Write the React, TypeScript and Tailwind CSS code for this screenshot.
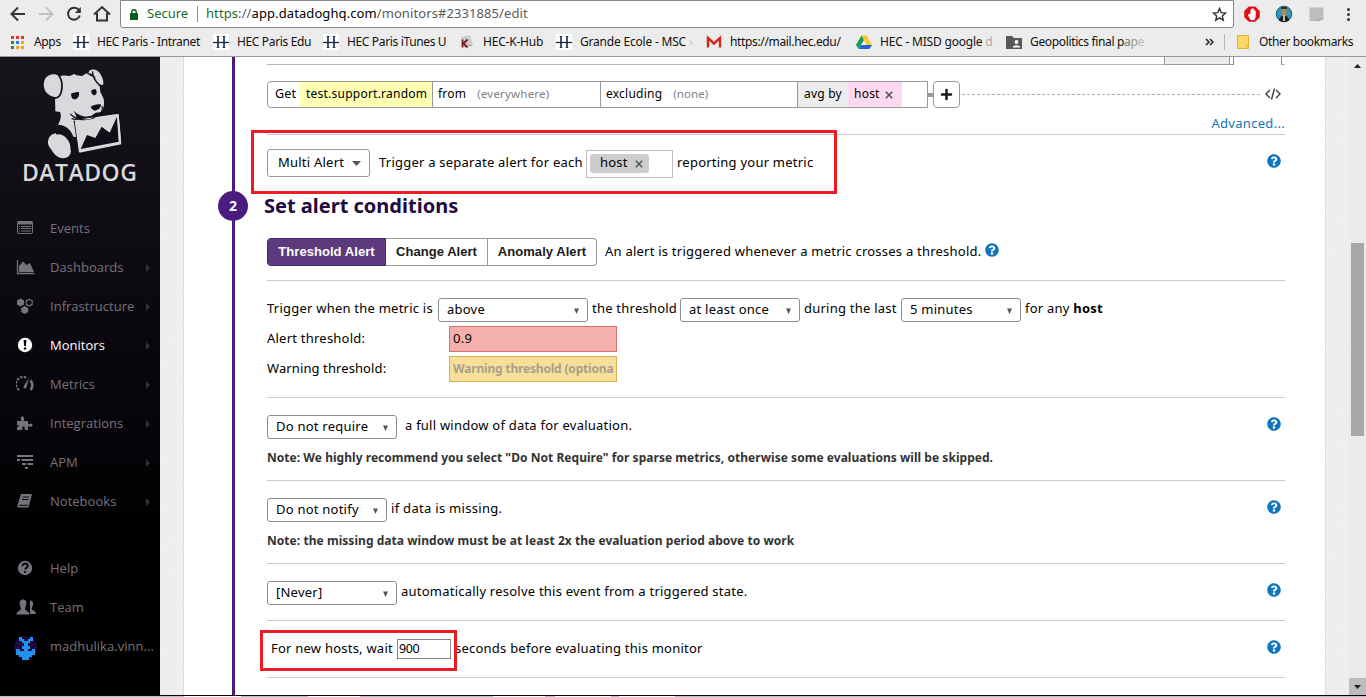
import React from "react";
import { FaQuestionCircle, FaPlus } from "react-icons/fa";

type Kids = { children?: React.ReactNode };

const T = ({ children, className = "" }: Kids & { className?: string }) => (
  <span className={`block shrink-0 whitespace-nowrap ${className}`}>{children}</span>
);

const HecIcon = () => (
  <svg width="16" height="16" viewBox="0 0 16 16" className="shrink-0">
    <rect width="16" height="16" fill="#fff" />
    <path d="M5 2v12M11 2v12" stroke="#14284b" strokeWidth="1.6" />
    <path d="M0 8.5h16" stroke="#14284b" strokeWidth="1.3" />
    <path d="M3.5 2.5h3M9.500 2.500h3M3.500 13.500h3M9.500 13.500h3" stroke="#14284b" strokeWidth=".6" />
  </svg>
);

const Toolbar = () => (
  <div className="flex h-[28px] items-center">
    <svg width="120" height="28" viewBox="0 0 120 28" className="shrink-0" fill="none" stroke="#333" strokeWidth="2">
      <path d="M25 14H12.500M18 7.500L11.500 14l6.500 6.500" />
      <path d="M39 14h12.500M46 7.500l6.500 6.500-6.500 6.500" stroke="#c3c3c3" />
      <path d="M79 10.200A6 6 0 1 0 79.800 15.500" />
      <path d="M80.800 7v6h-6z" fill="#333" stroke="none" />
      <path d="M94 14.500l8-7.500 8 7.500M97 13v7.500h10V13" />
    </svg>
    <div className="flex h-[28px] w-[1114px] shrink-0 items-center rounded-b-[3px] border border-[#868686] bg-white">
      <svg width="8" height="11" viewBox="0 0 8 11" className="ml-[9px] shrink-0">
        <rect y="4" width="8" height="7" rx=".6" fill="#0b5c1e" />
        <path d="M1.800 4.500V3a2.200 2.200 0 0 1 4.400 0v1.500" fill="none" stroke="#0b5c1e" strokeWidth="1.400" />
      </svg>
      <T className="ml-[9px] w-[50px] text-[13px] tracking-[0px] text-[#1b6c30]">Secure</T>
      <div className="h-[16px] w-px bg-[#8b8b8b]" />
      <T className="ml-[8px] w-[340px] text-[13px] tracking-[0.09px] text-[#5a5a5a]">
        <span className="text-[#1b6c30]">https</span>://<span className="text-black">app.datadoghq.com</span>/monitors#2331885/edit
      </T>
      <svg width="15" height="15" viewBox="0 0 15 15" className="ml-auto mr-[6px] shrink-0">
        <path d="M7.500 1.500l1.700 4.100 4.400.4-3.300 2.900 1 4.300-3.800-2.300-3.800 2.300 1-4.300L1.400 6l4.400-.4z" fill="none" stroke="#333" strokeWidth="1.400" />
      </svg>
    </div>
    <svg width="132" height="28" viewBox="0 0 132 28" className="shrink-0">
      <path d="M14.800 6.500h6.400l4.600 4.600v6.200l-4.600 4.500h-6.400l-4.600-4.500v-6.200z" fill="#e0101a" />
      <path d="M15 13.500l1.500 1V9.500h1.300V8.300h1.300v1h1.300v1.400h1.300V17l-1.500 3h-3.500L14 15.500z" fill="#fff" />
      <circle cx="50" cy="14" r="7.800" fill="#2a9ab8" stroke="#27607a" strokeWidth="1" />
      <path d="M44.500 20l3.500-5h4l3.500 5c-3 2.500-8 2.500-11 0z" fill="#1d2124" />
      <path d="M47 8.500h6l-.8 7.500h-4.400z" fill="#a98a62" />
      <path d="M47 7h6v2h-6z" fill="#3a2c20" />
      <path d="M49 15h2v6h-2z" fill="#d8b98a" />
      <path d="M75.500 7.500h14v8l-6 5.500h-8z" fill="#bdbdbd" />
      <path d="M89.500 15.500v5.500h-6z" fill="#d5d5d5" /><path d="M83 21l6.500-3.500" stroke="#8b8b8b" />
      <g fill="#333"><circle cx="114.500" cy="9.500" r="1.500" /><circle cx="114.500" cy="14.500" r="1.500" /><circle cx="114.500" cy="19.500" r="1.500" /></g>
    </svg>
  </div>
);

const appColors = ["bg-[#e8352b]", "bg-[#e8352b]", "bg-[#e8352b]", "bg-[#1d8e3e]", "bg-[#3478f6]", "bg-[#f4a11d]", "bg-[#1d8e3e]", "bg-[#f4a11d]", "bg-[#f4a11d]"];

const Bookmarks = () => (
  <div className="flex h-[28px] items-center pl-[11px] text-[12px] tracking-[-0.35px] text-[#111]">
    <div className="grid w-[13px] shrink-0 grid-cols-3 gap-[2px]">
      {appColors.map((c, i) => (
        <i key={i} className={`block h-[3px] w-[3px] ${c}`} />
      ))}
    </div>
    <T className="ml-[10px] w-[39px]">Apps</T>
    <HecIcon />
    <T className="ml-[8px] w-[116px]">HEC Paris - Intranet</T>
    <HecIcon />
    <T className="ml-[8px] w-[86px]">HEC Paris Edu</T>
    <HecIcon />
    <T className="ml-[8px] w-[112px]">HEC Paris iTunes U</T>
    <svg width="16" height="16" viewBox="0 0 16 16" className="shrink-0">
      <path d="M2 3l9-2 3 10-9 3z" fill="#cdcdcd" />
      <path d="M3.500 5.500v8M8.500 5.500L4.500 9.500l4 4" stroke="#7c1620" strokeWidth="1.800" fill="none" />
      <path d="M9 11.500h4" stroke="#c98a8f" />
    </svg>
    <T className="ml-[8px] w-[73px] tracking-[-0.2px]">HEC-K-Hub</T>
    <HecIcon />
    <T className="ml-[8px] w-[126px] tracking-[-0.2px]">Grande Ecole - MSC <span className="text-[#c5c5c5]">›</span></T>
    <svg width="16" height="16" viewBox="0 0 16 16" className="shrink-0">
      <path d="M2 4h12v9H2z" fill="#ececec" />
      <path d="M2 13.500V4l6 5.500L14 4v9.500" fill="none" stroke="#d3261d" strokeWidth="2.400" />
    </svg>
    <T className="ml-[8px] w-[126px]">https://mail.hec.edu/</T>
    <svg width="16" height="16" viewBox="0 0 16 16" className="shrink-0">
      <path d="M5.500 1.500L0 11l2.700 4L8 5.800z" fill="#109d58" />
      <path d="M5.500 1.500h5L16 11h-5.300z" fill="#fcc62d" />
      <path d="M5.200 11H16l-2.600 4H2.700z" fill="#2463e4" />
    </svg>
    <T className="ml-[8px] w-[126px] tracking-[-0.2px]">HEC - MISD google <span className="text-[#aaa]">d</span></T>
    <svg width="16" height="14" viewBox="0 0 16 14" className="shrink-0">
      <path d="M0 1h6l2 2h8v11H0z" fill="#585858" />
      <circle cx="10.500" cy="7" r="1.900" fill="#fff" /><path d="M6.800 12.500c0-3 7.400-3 7.400 0z" fill="#fff" />
    </svg>
    <T className="ml-[8px] w-[175px]">Geopolitics final p<span className="text-[#777]">a</span><span className="text-[#999]">p</span><span className="text-[#bbb]">e</span></T>
    <svg width="9" height="8" viewBox="0 0 9 8" className="shrink-0">
      <path d="M1 1l3 3-3 3M5 1l3 3-3 3" fill="none" stroke="#222" strokeWidth="1.500" />
    </svg>
    <div className="ml-[10px] h-[16px] w-px bg-[#b5b5b5]" />
    <svg width="12" height="14" viewBox="0 0 12 14" className="ml-[12px] shrink-0">
      <path d="M.5.500h11v9.500l-2 3.500h-9z" fill="#fdd868" stroke="#e3b233" /><path d="M9.500 13.500V9.500h2v4z" fill="#fdd868" stroke="#e3b233" />
    </svg>
    <T className="ml-[10px]">Other bookmarks</T>
  </div>
);

const DogLogo = () => (
  <svg width="90" height="96" viewBox="0 0 270 288" className="ml-[40px] mt-[9px] block">
    <g fill="#d9d8da">
      <path d="M58 32C72 26 82 30 90 30L102 24l8 4 16 2 14-8 12 8c14 4 22 12 27 26l2 22 10 20c3 16 0 34-10 40l-16 4-12 8c-18 6-38-2-52-16l6 12 7 24 0 44-14-2c-6-20-24-36-46-36 10-16 10-30 6-38L46 136 45 94z" />
      <path d="M14 42C20 26 44 20 56 30c10 12 8 40 0 58-6 10-22 4-32-4C12 76 8 54 14 42z" />
      <path d="M146 22c-2-12 18-16 28-6 10 8 20 32 15 40-8 4-16-8-22-20-6-10-12-14-21-14z" />
      <path d="M26 218c6-16 28-20 44-12 14 8 24 28 23 44 0 20-10 26-24 27-16 0-28-14-36-28-8-8-12-20-7-31z" />
      <path d="M99 162L237 143l7 92-126 25z" />
    </g>
    <g fill="none" stroke="#120e17" strokeWidth="5">
      <path d="M56 28c14 18 12 48 2 62-5 6-14 7-20 5" />
      <path d="M158 16c-2 18 10 30 22 44" strokeWidth="4" />
      <path d="M48 203c26-4 48 20 46 50" />
      <path d="M91 144c18 18 50 22 66 14 14-7 14-12 12-18M186 120c2 12 0 22-8 27" strokeWidth="3.500" />
      <path d="M95 158l10 2 132-21 12 90" strokeWidth="4" />
      <path d="M103 164l14 96" strokeWidth="4" />
    </g>
    <path d="M114 170l116-19 4 76-112 22z" fill="#d9d8da" />
    <path d="M122 249l19-42 25 9 19-34 24 18 22-48 5 75z" fill="#120e17" />
    <path d="M107 170l127-20 6 81-121 25z" fill="none" stroke="#d9d8da" strokeWidth="5" />
    <g fill="#120e17">
      <path d="M94 82l22-5c4 10-2 22-12 23-8 0-12-8-10-18z" />
      <path d="M155 72l11-3c6 6 5 16-2 19-8 0-12-8-9-16z" />
      <path d="M152 122c8-6 20-9 31-7 0 10-8 17-18 19-6-2-11-6-13-12z" />
    </g>
  </svg>
);

const navIcons: Record<string, React.ReactNode> = {
  Events: (
    <>
      <rect x="1.500" y="1.500" width="15" height="12" rx="1.500" fill="none" stroke="currentColor" strokeWidth="1" />
      <path d="M1.500 3h15" stroke="currentColor" strokeWidth="3" />
      <path d="M3 6.500h1M5 6.500h10M3 8.500h1M5 8.500h10M3 11h1M5 11h10" stroke="currentColor" strokeWidth="1" />
    </>
  ),
  Dashboards: (
    <>
      <path d="M1.500 1v13.500h17" fill="none" stroke="currentColor" strokeWidth="1.300" />
      <path d="M3 13V7l4-4.500L10.500 6 14 4l4 9z" fill="currentColor" />
    </>
  ),
  Infrastructure: (
    <>
      <path d="M4.500.500L8 2.500v4L4.500 8.500 1 6.500v-4zM8.700 8l3.500 2v4l-3.500 2-3.500-2v-4z" fill="currentColor" />
      <path d="M13.200 1.200l3 1.700v3.400l-3 1.700-3-1.700V2.900z" fill="none" stroke="currentColor" strokeWidth="1.200" />
    </>
  ),
  Monitors: (
    <>
      <circle cx="9" cy="8" r="7.200" fill="currentColor" />
      <path d="M7.600 3h2.800l-.5 6H8.100z" fill="#050308" />
      <circle cx="9" cy="11.500" r="1.300" fill="#050308" />
    </>
  ),
  Metrics: (
    <>
      <path d="M3 14A7 7 0 0 1 11 2.300" fill="none" stroke="currentColor" strokeWidth="2" strokeDasharray="2.500 1.200" />
      <path d="M14.500 4.500A7 7 0 0 1 14.500 14" fill="none" stroke="currentColor" strokeWidth="2.600" />
      <path d="M13 2l-2.500 9.500c-1 2-3.500 1-3-1z" fill="currentColor" />
    </>
  ),
  Integrations: (
    <path d="M1 6h4.500c-1-2-1-4.500 1-4.500s2 2.500 1 4.500H12v3.500c2-1 4.500-1.200 4.500.8s-2.500 1.700-4.500.7v4H8.500c.7-1.500.5-3.500-1-3.500s-1.700 2-1 3.500H1V12c2 .5 2.500-2 1-2l-1 .3z" fill="currentColor" />
  ),
  APM: <path d="M1 2h16M1 6h3M5.500 6H17M6 10h4M11.500 10H17M9 14h3" stroke="currentColor" strokeWidth="2" />,
  Notebooks: (
    <>
      <path d="M5 1h11l-3.500 13.500H2.500C1 14.500 1 13 1.500 12z" fill="currentColor" />
      <path d="M6.500 4h6.500M6 6.500h6.500M3 12.300h9" stroke="#08060c" strokeWidth="1" />
    </>
  ),
  Help: (
    <>
      <circle cx="9" cy="8" r="7.200" fill="currentColor" />
      <path d="M6.500 6.200c0-3.600 5.200-3.200 5.200-.2 0 1.700-2.500 1.700-2.500 3.600" fill="none" stroke="#000" strokeWidth="1.900" />
      <circle cx="9.100" cy="12" r="1.100" />
    </>
  ),
  Team: (
    <>
      <path d="M14 1.500c2.500 0 3.500 2 3 4.500-.4 2-1.200 2.500-1.200 4 0 1.500 4.200 1.500 4.200 5h-6z" fill="currentColor" />
      <path d="M7 .500c3 0 3.700 2.500 3.200 5-.4 2-1.200 3-1.200 4.200C9 11.500 13.500 12 13.500 15.500H.5C.5 12 5 11.500 5 9.700 5 8.500 4.200 7.500 3.800 5.500 3.300 3 4 .500 7 .500z" fill="currentColor" />
    </>
  ),
};

const NavItem = ({ name, active, arrow = true }: { name: string; active?: boolean; arrow?: boolean }) => (
  <div className={`flex h-[39px] items-center pl-[16px] ${active ? "text-white" : "text-[#77737b]"}`}>
    <svg width="21" height="16" viewBox="0 0 21 16" className="mb-[2px] shrink-0">{navIcons[name]}</svg>
    <T className="ml-[13px] w-[96px] text-[13px] tracking-[0.02px]">{name}</T>
    {arrow && <svg width="4" height="8" viewBox="0 0 4 8"><path d="M0 0l4 4-4 4z" fill="#34313a" /></svg>}
  </div>
);

const Sidebar = () => (
  <aside className="flex w-[160px] shrink-0 flex-col bg-gradient-to-b from-[#17141c] via-[#060409] via-60% to-black to-90% font-['Open_Sans',sans-serif]">
    <DogLogo />
    <T className="ml-[22px] h-[26px] w-[120px] text-[23px] font-semibold leading-[21px] tracking-[0.5px] text-[#d9d8da]">DATADOG</T>
    <nav className="mt-[21px]">
      {["Events", "Dashboards", "Infrastructure", "Monitors", "Metrics", "Integrations", "APM", "Notebooks"].map((n) => (
        <NavItem key={n} name={n} active={n === "Monitors"} arrow={n !== "Events"} />
      ))}
    </nav>
    <nav className="mt-[28px]">
      <NavItem name="Help" arrow={false} />
      <NavItem name="Team" arrow={false} />
      <div className="flex h-[39px] items-center pl-[14px] text-[#77737b]">
        <svg width="23" height="24" viewBox="0 0 23 24" className="mt-[2px] shrink-0">
          <circle cx="11.500" cy="11.500" r="11.500" fill="#1d0a40" />
          <path d="M5 1h3v2h2v2h4V3h2V1h3v4h-3v2h-2v3h2v3h-2v2h4v-2h3v6h-3v2h-3v3h-7v-3H5v-2H2v-6h4v2h4v-2H8v-3h2V7H8V5H5z" fill="#2291ee" />
        </svg>
        <T className="ml-[13px] w-[104px] text-[13px] tracking-[0.05px]">madhulika.vinn...</T>
      </div>
    </nav>
  </aside>
);

const Texture = ({ className = "" }: { className?: string }) => (
  <div className={`shrink-0 bg-[#f1f1f1] ${className}`}>
    <svg width="100%" height="100%" className="block opacity-[0.1]">
      <filter id="grain">
        <feTurbulence type="fractalNoise" baseFrequency="0.5" numOctaves="2" />
        <feColorMatrix type="saturate" values="0" />
      </filter>
      <rect width="100%" height="100%" filter="url(#grain)" />
    </svg>
  </div>
);

const Help = ({ className = "" }: { className?: string }) => <FaQuestionCircle className={`shrink-0 text-[14px] text-[#0f76bd] ${className}`} />;

const Cross = ({ className = "" }: { className?: string }) => (
  <svg width="8" height="8" viewBox="0 0 8 8" className={`inline-block ${className}`}>
    <path d="M.8.800l6.400 6.400M7.200.800L.8 7.200" stroke="#555" strokeWidth="1.600" />
  </svg>
);

const Select = ({ children, className = "" }: Kids & { className?: string }) => (
  <div className={`flex h-[24px] shrink-0 items-center justify-between rounded-[3px] border border-[#8c8c8c] bg-white pl-[8px] pr-[8px] ${className}`}>
    <T>{children}</T>
    <svg width="5" height="6" viewBox="0 0 5 6" className="mt-[2px]"><path d="M0 .500h5L2.500 6z" fill="#555" /></svg>
  </div>
);

const Section = ({ children, className = "" }: Kids & { className?: string }) => (
  <section className={`flex w-[1018px] flex-col border-b border-[#cbcbcb] ${className}`}>{children}</section>
);

const QueryRow = () => (
  <div className="mt-[16px] flex h-[27px] items-center">
    <div className="flex h-[27px] w-[661px] shrink-0 items-stretch rounded-l-[4px] border border-[#999] text-[12px] leading-[24px]">
      <T className="w-[32px] pl-[7px] text-[12.5px]">Get</T>
      <T className="w-[133px] border-r border-[#999] bg-[#ffffb3] pl-[6px]">test.support.random</T>
      <T className="w-[168px] border-r border-[#999] pl-[5px]">from<span className="ml-[11px] text-[11.5px] tracking-[0.2px] text-[#828282]">(everywhere)</span></T>
      <T className="w-[197px] border-r border-[#999] pl-[5px]">excluding<span className="ml-[11px] text-[11.5px] tracking-[0.1px] text-[#828282]">(none)</span></T>
      <T className="w-[50px] bg-[#ececec] pl-[6px]">avg by</T>
      <T className="w-[54px] bg-[#fdd8f1] pl-[6px]">host<Cross className="ml-[5px]" /></T>
    </div>
    <div className="h-[4px] w-[5px] bg-[#999]" />
    <div className="flex h-[27px] w-[27px] shrink-0 items-center justify-center rounded-[4px] border border-[#999]">
      <FaPlus className="text-[13px] text-[#1a1a1a]" />
    </div>
    <div className="ml-[2px] w-[298px] border-t border-dashed border-[#b0b0b0]" />
    <svg width="16" height="12" viewBox="0 0 16 12" className="mb-[2px] ml-[5px] shrink-0" fill="none" stroke="#3c3c3c" strokeWidth="1.400">
      <path d="M5 2L1 6l4 4M11 2l4 4-4 4M9.500.500l-3 11" />
    </svg>
  </div>
);

const TypeButton = ({ children, className = "" }: Kids & { className?: string }) => (
  <T className={`h-[28px] border border-[#999] text-center font-['Liberation_Sans',sans-serif] text-[13px] font-bold leading-[25px] tracking-[0.05px] ${className}`}>{children}</T>
);

const Form = () => (
  <div className="flex w-[1018px] flex-col">
    <div className="flex h-[8px]">
      <div className="w-[897px] border-b border-[#b5b5b5]" />
      <div className="w-[66px] border-x border-b border-[#999] bg-[#ececec]" />
      <div className="w-[3px] border-b border-[#999]" />
      <div className="w-[49px] border-x border-[#888]" />
      <div className="w-[3px] border-b border-[#b5b5b5]" />
    </div>
    <Section className="h-[70px]">
      <QueryRow />
      <T className="mt-[6px] self-end leading-[18px] tracking-[0.3px] text-[#0f76bd]">Advanced...</T>
    </Section>

    <div className="mt-[14px] flex h-[29px] items-start">
      <div className="flex h-[28px] w-[103px] shrink-0 items-center justify-between rounded-[3px] border border-[#999] pl-[10px] pr-[8px]">
        <T className="mb-px">Multi Alert</T>
        <svg width="9" height="5" viewBox="0 0 9 5"><path d="M0 0h9L4.500 5z" fill="#555" /></svg>
      </div>
      <T className="ml-[9px] w-[207px] leading-[27px]">Trigger a separate alert for each</T>
      <div className="mt-px flex h-[28px] w-[87px] shrink-0 border border-[#bbb] pl-[3px] pt-[3px]">
        <T className="h-[19px] w-[59px] rounded-[3px] bg-[#cdcdcd] pl-[10px] leading-[17px]">host<Cross className="ml-[7px]" /></T>
      </div>
      <T className="ml-[4px] w-[137px] leading-[27px]">reporting your metric</T>
      <Help className="ml-auto mr-[4px] mt-[5px]" />
    </div>

    <h2 className="-ml-[3px] mt-[13px] h-[30px] text-[20px] font-bold leading-[30px] tracking-[0px] text-[#1f0a40]">Set alert conditions</h2>

    <Section className="h-[60px] pt-[17px]">
      <div className="flex h-[28px] items-center">
        <TypeButton className="w-[119px] rounded-l-[4px] border-[#4a2080]! bg-[#5d3a7e] text-white">Threshold Alert</TypeButton>
        <TypeButton className="w-[102px] border-l-0 text-[#1a1a1a]">Change Alert</TypeButton>
        <TypeButton className="w-[109px] rounded-r-[4px] border-l-0 text-[#1a1a1a]">Anomaly Alert</TypeButton>
        <T className="ml-[8px] w-[380px]">An alert is triggered whenever a metric crosses a threshold.</T>
        <Help className="mb-[4px]" />
      </div>
    </Section>

    <Section className="h-[117px] pt-[17px]">
      <div className="flex h-[24px] items-center">
        <T className="mb-[2px] w-[171px]">Trigger when the metric is</T>
        <Select className="w-[150px]">above</Select>
        <T className="mb-[2px] ml-[4px] w-[88px]">the threshold</T>
        <Select className="w-[120px]">at least once</Select>
        <T className="mb-[2px] ml-[4px] w-[97px]">during the last</T>
        <Select className="w-[120px]">5 minutes</Select>
        <T className="mb-[2px] ml-[4px]">for any <b>host</b></T>
      </div>
      <div className="mt-[4px] flex h-[26px] items-center">
        <T className="w-[182px]">Alert threshold:</T>
        <T className="h-[26px] w-[168px] border border-[#d9716e] bg-[#f5b0ad] pl-[3px] leading-[23px]">0.9</T>
      </div>
      <div className="mt-[4px] flex h-[26px] items-center">
        <T className="w-[182px] tracking-[0.1px]">Warning threshold:</T>
        <T className="h-[26px] w-[168px] overflow-hidden border border-[#d8b250] bg-[#f7df99] pl-[3px] text-[12px] font-bold leading-[24px] tracking-[-0.18px] text-[#aaa18a]">Warning threshold (optiona</T>
      </div>
    </Section>

    <Section className="h-[83px] pt-[17px]">
      <div className="flex h-[24px] items-center">
        <Select className="w-[130px]">Do not require</Select>
        <T className="mb-[2px] ml-[8px]">a full window of data for evaluation.</T>
        <Help className="mb-[6px] ml-auto mr-[4px]" />
      </div>
      <T className="mt-[10px] text-[12px] font-bold leading-[18px] tracking-[0.04px] text-[#333]">Note: We highly recommend you select "Do Not Require" for sparse metrics, otherwise some evaluations will be skipped.</T>
    </Section>

    <Section className="h-[83px] pt-[17px]">
      <div className="flex h-[24px] items-center">
        <Select className="w-[120px]">Do not notify</Select>
        <T className="mb-[2px] ml-[4px] tracking-[0.3px]">if data is missing.</T>
        <Help className="mb-[6px] ml-auto mr-[4px]" />
      </div>
      <T className="mt-[10px] text-[12px] font-bold leading-[18px] tracking-[0.05px] text-[#333]">Note: the missing data window must be at least 2x the evaluation period above to work</T>
    </Section>

    <Section className="h-[57px] pt-[17px]">
      <div className="flex h-[24px] items-center">
        <Select className="w-[130px]">[Never]</Select>
        <T className="mb-[2px] ml-[4px]">automatically resolve this event from a triggered state.</T>
        <Help className="mb-[6px] ml-auto mr-[4px]" />
      </div>
    </Section>

    <Section className="h-[57px] pt-[18px]">
      <div className="flex h-[20px] items-center">
        <T className="ml-[4px] w-[126px]">For new hosts, wait</T>
        <T className="h-[20px] w-[54px] border border-[#888] pl-[1px] text-[12.5px] leading-[18px] tracking-[-0.4px]">900</T>
        <T className="ml-[4px]">seconds before evaluating this monitor</T>
        <Help className="mb-[4px] ml-auto mr-[4px]" />
      </div>
    </Section>
  </div>
);

export default function App() {
  return (
    <div className="relative flex h-[697px] w-[1366px] flex-col overflow-hidden bg-white font-['Noto_Sans','Open_Sans',sans-serif] text-black">
      <header className="flex h-[57px] shrink-0 flex-col border-b border-[#999] bg-[#ececec]">
        <Toolbar />
        <Bookmarks />
      </header>

      <div className="flex h-[638px] shrink-0">
        <Sidebar />
        <Texture className="w-[23px]" />
        <main className="flex h-[638px] w-[1143px] shrink-0 overflow-hidden border-x border-[#dedede] bg-white text-[13px] tracking-[0.23px]">
          <div className="relative ml-[48px] w-[3px] shrink-0 bg-[#4a1c80]">
            <div className="absolute -left-[14px] top-[134px] h-[30px] w-[30px] rounded-full bg-[#4a1c80] text-center text-[14px] font-bold leading-[29px] text-white">2</div>
          </div>
          <div className="ml-[32px]">
            <Form />
          </div>
        </main>
        <Texture className="w-[23px]" />
        <div className="flex w-[17px] shrink-0 flex-col items-center bg-[#ebebeb]">
          <svg width="7" height="4" viewBox="0 0 7 4" className="mt-[7px]"><path d="M0 4L3.500 0 7 4z" fill="#222" /></svg>
          <div className="mt-[175px] h-[193px] w-[13px] bg-[#a8a8a8]" />
          <div className="mt-auto flex h-[17px] w-[17px] items-center justify-center bg-[#bdbdbd]">
            <svg width="7" height="4" viewBox="0 0 7 4"><path d="M0 0h7L3.500 4z" fill="#222" /></svg>
          </div>
        </div>
      </div>

      <footer className="flex h-[2px] shrink-0 border-t border-[#05080c] bg-[#a9c6df]">
        <div className="ml-[184px] w-[57px] bg-white" />
        <div className="ml-[67px] w-[52px] bg-white" />
        <div className="ml-[133px] w-[52px] bg-white" />
        <div className="ml-[10px] w-[56px] bg-white" />
        <div className="ml-[8px] w-[56px] bg-white" />
      </footer>

      <div className="absolute left-[251px] top-[130px] h-[64px] w-[586px] border-[3px] border-[#ed1c24]" />
      <div className="absolute left-[260px] top-[630px] h-[41px] w-[197px] border-[3px] border-[#ed1c24]" />
    </div>
  );
}
